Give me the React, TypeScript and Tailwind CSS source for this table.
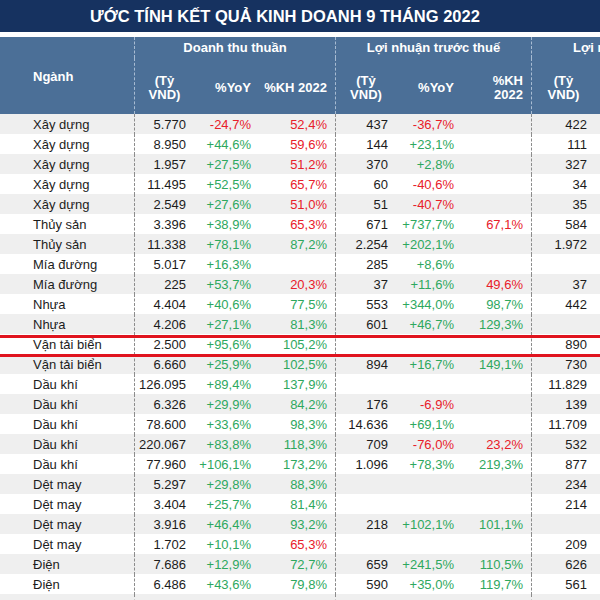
const rows: string[][] = [
  ["Xây dựng", "5.770", "-24,7%", "52,4%", "437", "-36,7%", "", "422"],
  ["Xây dựng", "8.950", "+44,6%", "59,6%", "144", "+23,1%", "", "111"],
  ["Xây dựng", "1.957", "+27,5%", "51,2%", "370", "+2,8%", "", "327"],
  ["Xây dựng", "11.495", "+52,5%", "65,7%", "60", "-40,6%", "", "34"],
  ["Xây dựng", "2.549", "+27,6%", "51,0%", "51", "-40,7%", "", "35"],
  ["Thủy sản", "3.396", "+38,9%", "65,3%", "671", "+737,7%", "67,1%", "584"],
  ["Thủy sản", "11.338", "+78,1%", "87,2%", "2.254", "+202,1%", "", "1.972"],
  ["Mía đường", "5.017", "+16,3%", "", "285", "+8,6%", "", ""],
  ["Mía đường", "225", "+53,7%", "20,3%", "37", "+11,6%", "49,6%", "37"],
  ["Nhựa", "4.404", "+40,6%", "77,5%", "553", "+344,0%", "98,7%", "442"],
  ["Nhựa", "4.206", "+27,1%", "81,3%", "601", "+46,7%", "129,3%", ""],
  ["Vận tải biển", "2.500", "+95,6%", "105,2%", "", "", "", "890"],
  ["Vận tải biển", "6.660", "+25,9%", "102,5%", "894", "+16,7%", "149,1%", "730"],
  ["Dầu khí", "126.095", "+89,4%", "137,9%", "", "", "", "11.829"],
  ["Dầu khí", "6.326", "+29,9%", "84,2%", "176", "-6,9%", "", "139"],
  ["Dầu khí", "78.600", "+33,6%", "98,3%", "14.636", "+69,1%", "", "11.709"],
  ["Dầu khí", "220.067", "+83,8%", "118,3%", "709", "-76,0%", "23,2%", "532"],
  ["Dầu khí", "77.960", "+106,1%", "173,2%", "1.096", "+78,3%", "219,3%", "877"],
  ["Dệt may", "5.297", "+29,8%", "88,3%", "", "", "", "234"],
  ["Dệt may", "3.404", "+25,7%", "81,4%", "", "", "", "214"],
  ["Dệt may", "3.916", "+46,4%", "93,2%", "218", "+102,1%", "101,1%", ""],
  ["Dệt may", "1.702", "+10,1%", "65,3%", "", "", "", "209"],
  ["Điện", "7.686", "+12,9%", "72,7%", "659", "+241,5%", "110,5%", "626"],
  ["Điện", "6.486", "+43,6%", "79,8%", "590", "+35,0%", "119,7%", "561"],
  ["", "", "", "", "", "", "", ""],
];

const cols =
  "grid grid-cols-[134px_60px_65px_76px_61px_66px_69px_64px_120px]";

const RED = "text-[#e8202a]";
const GREEN = "text-[#2ea85e]";

function yoyColor(v: string) {
  return v.startsWith("-") ? RED : GREEN;
}

function khColor(v: string) {
  return parseFloat(v.replace(",", ".")) < 70 ? RED : GREEN;
}

export default function App() {
  return (
    <div className="w-[600px] h-[600px] overflow-hidden bg-white font-['Liberation_Sans',Arial,sans-serif]">
      <div className="h-[32px] bg-[#163260] flex items-center pl-[90px] text-white font-bold text-[16.5px] whitespace-nowrap">
        ƯỚC TÍNH KẾT QUẢ KINH DOANH 9 THÁNG 2022
      </div>
      <div className="h-[5px] bg-white" />

      <div
        className={`${cols} grid-rows-[21px_56px] bg-[#4b6f97] text-white font-bold text-[13px] w-[735px]`}
      >
        <div className="row-span-2 flex items-center pl-[33px] pt-[3px]">Ngành</div>
        <div className="col-span-3 flex items-center justify-center border-l border-dashed border-[#a7bbd2]">
          Doanh thu thuần
        </div>
        <div className="col-span-3 flex items-center justify-center border-l border-dashed border-[#a7bbd2]">
          Lợi nhuận trước thuế
        </div>
        <div className="col-span-2 flex items-center pl-[41px] whitespace-nowrap border-l border-dashed border-[#a7bbd2]">
          Lợi nhuận sau thuế
        </div>

        <div className="flex items-center justify-center text-center leading-[14px] pt-[3px] border-l border-dashed border-[#a7bbd2]">
          (Tỷ
          <br />
          VND)
        </div>
        <div className="flex items-center justify-end pr-2 pt-[3px]">%YoY</div>
        <div className="flex items-center justify-end text-right pr-2 pt-[3px] leading-[14px]">
          %KH 2022
        </div>
        <div className="flex items-center justify-center text-center leading-[14px] pt-[3px] border-l border-dashed border-[#a7bbd2]">
          (Tỷ
          <br />
          VND)
        </div>
        <div className="flex items-center justify-end pr-2 pt-[3px]">%YoY</div>
        <div className="flex items-center justify-end text-right pr-2 pt-[3px] leading-[14px]">
          %KH 2022
        </div>
        <div className="flex items-center justify-center text-center leading-[14px] pt-[3px] border-l border-dashed border-[#a7bbd2]">
          (Tỷ
          <br />
          VND)
        </div>
        <div />
      </div>

      <div className="text-[13px] leading-[21px] text-[#1c1c1c] w-[735px]">
        {rows.map((r, i) => (
          <div
            key={i}
            className={`${cols} relative h-[20px] ${
              i % 2 === 0 ? "bg-[#efefef]" : "bg-white"
            }`}
          >
            <div className="pl-[33px] whitespace-nowrap">{r[0]}</div>
            <div className="text-right pr-2 border-l border-dashed border-[#8c8c8c]">
              {r[1]}
            </div>
            <div className={`text-right pr-2 ${yoyColor(r[2])}`}>{r[2]}</div>
            <div className={`text-right pr-2 ${khColor(r[3])}`}>{r[3]}</div>
            <div className="text-right pr-2 border-l border-dashed border-[#8c8c8c]">
              {r[4]}
            </div>
            <div className={`text-right pr-2 ${yoyColor(r[5])}`}>{r[5]}</div>
            <div className={`text-right pr-2 ${khColor(r[6])}`}>{r[6]}</div>
            <div className="text-right pr-2 border-l border-dashed border-[#8c8c8c]">
              {r[7]}
            </div>
            <div />
            {i === 11 && (
              <div className="absolute left-0 right-0 top-[1px] h-[22px] border-y-[3px] border-[#e0141e] z-10 pointer-events-none" />
            )}
          </div>
        ))}
      </div>
    </div>
  );
}
